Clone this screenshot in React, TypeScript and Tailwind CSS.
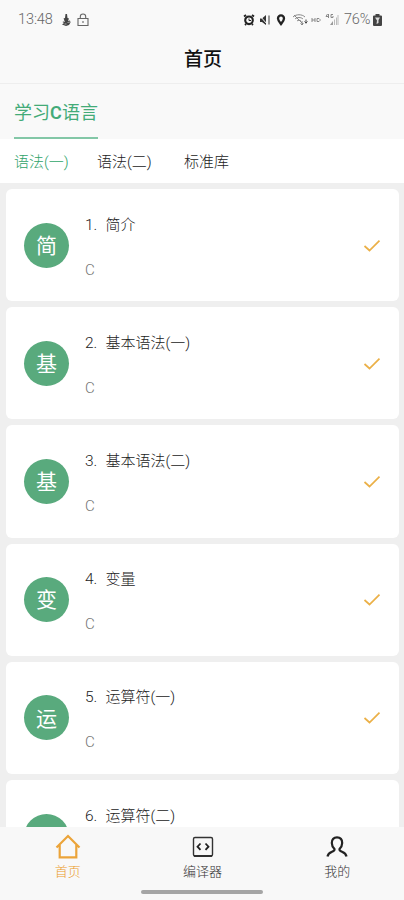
import clsx from "clsx";
import { FC, ReactNode } from "react";

const lessons = [
  "简介",
  "基本语法(一)",
  "基本语法(二)",
  "变量",
  "运算符(一)",
  "运算符(二)",
];

const StatusBar: FC = () => (
  <div className="flex h-[38px] shrink-0 items-center pt-px pr-[22px] pl-[18px] text-[14.5px] text-[#666]">
    <span className="w-[36px] font-light tracking-[-0.1px]">13:48</span>
    <svg className="ml-[6px] h-[14px] w-3" viewBox="0 0 12 14" fill="#444">
      <path d="M5.500 1H7l.5 4 1.500.5-1 2.500 2-.5.5 2-1.500 2.500-3 1-4-1.500 2-1.500L2.500 9l2-1.500-1-2L5 5z" />
      <path d="M3 8.500h2M7.500 9.500l2.500-.5M4.500 11h2" stroke="#aaa" fill="none" />
    </svg>
    <svg
      className="ml-[5px] h-[14px] w-3"
      viewBox="0 0 12 14"
      fill="none"
      stroke="#666"
      strokeWidth="1.1"
    >
      <path d="M1 5.500h10v7H1zM3.300 5.500V3.700a2.700 2.700 0 0 1 5.400 0v1.800" />
      <path d="M6 8v2" />
    </svg>
    <div className="ml-auto flex items-center">
      <svg className="h-3 w-3" viewBox="0 0 12 12" fill="none" stroke="#222">
        <path d="M1 2.500 3 1M11 2.500 9 1M2 11l1-1M10 11l-1-1" strokeWidth="1.8" />
        <circle cx="6" cy="6.300" r="3.800" strokeWidth="2.100" />
        <path d="M6 4.500v2h2" />
      </svg>
      <svg className="ml-[4px] h-3 w-3" viewBox="0 0 12 12" fill="#333">
        <path d="M1 4.500h2L7 1v10L3 8H1z" />
        <path d="m1 2 7 8" stroke="#f9f9f9" />
        <path d="M10 1.500v9" stroke="#555" strokeWidth="1.2" fill="none" />
      </svg>
      <svg
        className="ml-[5px] h-3 w-[10px]"
        viewBox="0 0 10 12"
        fill="none"
        stroke="#222"
        strokeWidth="2.300"
      >
        <path d="M5 10C3.500 8 2 6.300 2 4.400a3 3 0 0 1 6 0c0 1.900-1.500 3.600-3 5.600z" />
      </svg>
      <svg
        className="ml-[6px] h-[13px] w-4"
        viewBox="0 0 16 13"
        fill="none"
        stroke="#888"
      >
        <path d="M1 4c3-3 9-3 12 0M3 6c2-2 6-2 8 0M5 8c1-1 3-1 4 0" />
        <path d="m2 2 9 9" />
        <path d="M10 8v4M8.500 10.500 10 12l1.500-1.500" />
        <path d="M14 6.500v4M12.500 8.500 14 10l1.500-1.500" stroke="#444" />
      </svg>
      <svg
        className="ml-[3px] h-[6px] w-[10px]"
        viewBox="0 0 10 6"
        fill="none"
        stroke="#888"
      >
        <path d="M1 1v4M4 1v4M1 3h3M6 1.500h2l1 1v1l-1 1H6z" />
      </svg>
      <svg
        className="ml-[4px] h-[13px] w-[14px]"
        viewBox="0 0 14 13"
        fill="none"
        stroke="#888"
      >
        <path d="M2.500 1 1 3.500h3M3.500 1v4M8 1.500H6v3h2V3" />
        <path d="M5 12h3V8z" fill="#999" stroke="none" />
        <path d="M9.500 6.500V12M11.500 4.500V12M13 2v10" stroke="#bbb" />
      </svg>
      <span className="ml-[5px] w-[28px] font-light tracking-[-0.2px]">
        76%
      </span>
      <svg className="ml-px h-3 w-[9px]" viewBox="0 0 9 12">
        <path d="M2.500 0h4v1.500H8q1 0 1 1V11q0 1-1 1H1q-1 0-1-1V2.500q0-1 1-1h1.500z" fill="#444" />
        <path d="M2 3.500h5L5.500 6v3L3.500 10l.5-3.500z" fill="#ddd" />
      </svg>
    </div>
  </div>
);

const LessonCard: FC<{ index: number; title: string }> = ({ index, title }) => (
  <li className="flex h-[112.200px] shrink-0 items-center rounded-[6px] bg-white pr-[18px] pl-[18px]">
    <div className="flex size-[45px] items-center justify-center rounded-full bg-[#59aa7d] pt-[3px] text-[21px] text-white">
      {title[0]}
    </div>
    <div className="ml-4 flex flex-col gap-[25px] pt-[4px] text-[15px] leading-5 font-light">
      <div className="flex text-[#222]">
        <span className="w-[20.500px] text-[15.500px]">{index}.</span>
        <span>{title}</span>
      </div>
      <span className="text-[#777]">C</span>
    </div>
    <svg
      className="mt-px ml-auto h-3 w-[18px]"
      viewBox="0 0 18 12"
      fill="none"
      stroke="#ebb047"
      strokeWidth="1.700"
    >
      <path d="m1.500 6 5 4.500L16.500 .7" />
    </svg>
  </li>
);

const NavItem: FC<{ label: string; active?: boolean; children: ReactNode }> = ({
  label,
  active,
  children,
}) => (
  <button
    className={clsx(
      "flex flex-1 flex-col items-center pt-[7px] pl-px text-[13px] leading-4 font-light",
      active ? "text-[#eb9a2a]" : "text-[#333]",
    )}
  >
    <svg className="mb-[4px] size-[26px]" viewBox="0 0 26 26" fill="none">
      {children}
    </svg>
    {label}
  </button>
);

export default function App() {
  return (
    <div className="flex h-[900px] w-[404px] flex-col overflow-hidden bg-[#efefef] font-['Roboto','Noto_Sans_CJK_SC',sans-serif]">
      <header className="h-[84px] shrink-0 border-b border-[#eee] bg-[#f9f9f9]">
        <StatusBar />
        <h1 className="pt-[2px] pl-[2px] text-center text-[19px] leading-10 font-medium text-[#111]">
          首页
        </h1>
      </header>
      <div className="flex h-[55px] shrink-0 bg-[#f9f9f9] pl-[14px]">
        <button className="h-[55px] w-[84px] border-b-2 border-[#83c7a7] pt-[2px] text-[18px] leading-[53px] whitespace-nowrap text-[#43ab78]">
          学习<span className="font-semibold">C</span>语言
        </button>
      </div>
      <div className="flex h-[44px] shrink-0 items-center bg-white pt-[3px] pl-[14px] text-[15px] font-light text-[#222]">
        <span className="w-[83px] text-[#2fa36a]">语法(一)</span>
        <span className="w-[87px]">语法(二)</span>
        <span>标准库</span>
      </div>
      <ul className="flex min-h-0 flex-1 flex-col gap-[6px] overflow-hidden pt-[6px] pr-[5px] pl-[6px]">
        {lessons.map((title, i) => (
          <LessonCard key={title} index={i + 1} title={title} />
        ))}
      </ul>
      <nav className="h-[73px] shrink-0 bg-[#f8f8f8]">
        <div className="flex h-[63px]">
          <NavItem label="首页" active>
            <path
              d="M1.500 13.500 13 2l11.500 11.500M4.700 11v12.300h16.600V11"
              stroke="#eba43a"
              strokeWidth="2.200"
            />
          </NavItem>
          <NavItem label="编译器">
            <rect x="3.500" y="3.500" width="19" height="18.500" rx="1.500" stroke="#333" strokeWidth="1.4" />
            <path d="M4 22h18" stroke="#222" strokeWidth="1.600" />
            <path d="m10.500 9.500-3 3.200 3 3.200M15.500 9.500l3 3.200-3 3.200" stroke="#222" strokeWidth="1.800" />
          </NavItem>
          <NavItem label="我的">
            <path
              d="M3.500 22.500c.4-3 2.500-4 4.500-4.800 2-.8 2.800-1.500 2.500-2.700C9 13.500 7.800 11.500 7.800 9c0-3.500 2-5.700 5.200-5.700s5.200 2.200 5.200 5.700c0 2.500-1.200 4.500-2.700 6-.3 1.200.5 1.900 2.500 2.700s4.100 1.800 4.500 4.800"
              stroke="#222"
              strokeWidth="2.200"
            />
          </NavItem>
        </div>
        <div className="mx-auto h-1 w-[122px] rounded-full bg-[#a5a5a5]" />
      </nav>
    </div>
  );
}
